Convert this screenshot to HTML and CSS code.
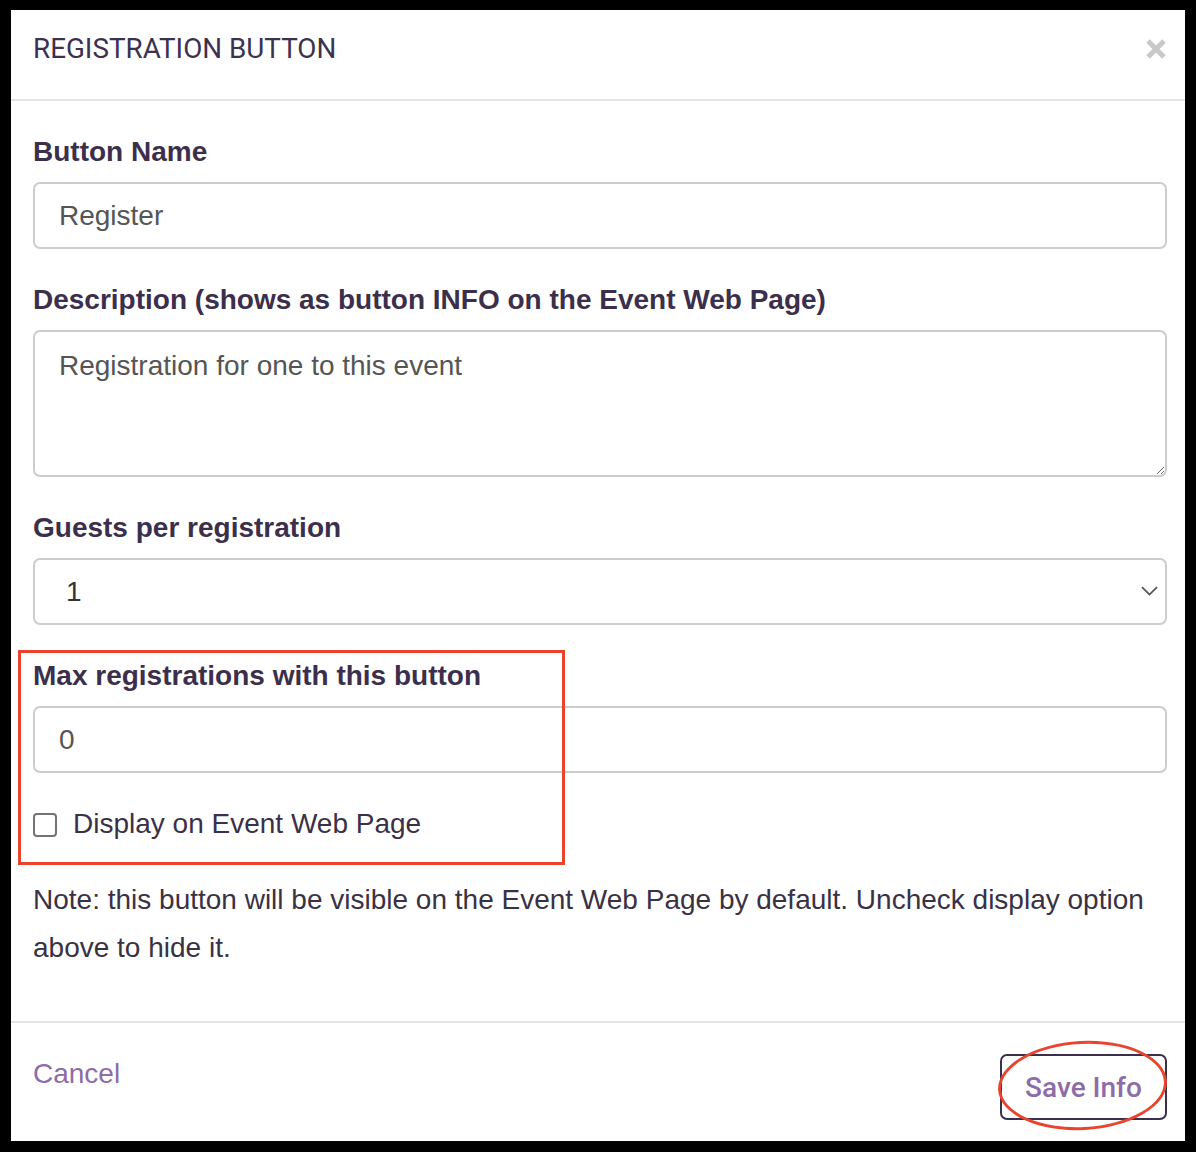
FILE: index.html
```html
<!DOCTYPE html>
<html>
<head>
<meta charset="utf-8">
<link rel="stylesheet" href="styles.css">
</head>
<body>
<div class="modal">
  <div class="modal-header">
    <h4 class="modal-title">REGISTRATION BUTTON</h4>
    <button class="close" aria-label="Close">
      <svg width="22" height="22" viewBox="0 0 22 22"><path d="M3 3 L19 19 M19 3 L3 19" stroke="#c8c8c8" stroke-width="5" stroke-linecap="butt"/></svg>
    </button>
  </div>
  <div class="modal-body">
    <div class="form-group">
      <label class="lbl">Button Name</label>
      <input class="ctrl" type="text" value="Register">
    </div>
    <div class="form-group">
      <label class="lbl">Description (shows as button INFO on the Event Web Page)</label>
      <textarea class="ctrl area">Registration for one to this event</textarea>
    </div>
    <div class="form-group">
      <label class="lbl">Guests per registration</label>
      <div class="select-wrap">
        <select class="ctrl sel"><option>1</option></select>
        <svg class="chev" width="17" height="10" viewBox="0 0 17 10"><path d="M1 1.2 L8.5 8.6 L16 1.2" fill="none" stroke="#555" stroke-width="1.8"/></svg>
      </div>
    </div>
    <div class="form-group">
      <label class="lbl">Max registrations with this button</label>
      <input class="ctrl" type="text" value="0">
    </div>
    <label class="check-row"><input type="checkbox" class="cb"><span>Display on Event Web Page</span></label>
    <p class="note">Note: this button will be visible on the Event Web Page by default. Uncheck display option above to hide it.</p>
  </div>
  <div class="modal-footer">
    <a class="cancel">Cancel</a>
    <button class="save">Save Info</button>
  </div>
  <div class="mark-box"></div>
  <div class="mark-ellipse"></div>
</div>
</body>
</html>
```
FILE: styles.css
```css
* { box-sizing: border-box; }
html, body { margin: 0; padding: 0; background: #000; }
body { padding: 10px 11px 11px 11px; font-family: "Liberation Sans", Arial, sans-serif; }
.modal {
  position: relative;
  width: 1174px;
  height: 1131px;
  background: #fff;
}
.modal-header {
  display: flex;
  align-items: center;
  justify-content: space-between;
  padding: 24px 18px 35px 22px;
  border-bottom: 2px solid #e5e5e5;
}
.modal-title {
  margin: 0;
  font-family: Roboto, "Liberation Sans", sans-serif;
  font-weight: 400;
  font-size: 27.8px;
  line-height: 30px;
  color: #3d3150;
}
.close {
  border: 0;
  background: none;
  padding: 0;
  width: 22px;
  height: 22px;
  display: flex;
}
.modal-body {
  padding: 31px 18px 49px 22px;
}
.form-group { margin-bottom: 31px; }
.lbl {
  display: block;
  font-weight: 700;
  font-size: 28px;
  line-height: 40px;
  color: #3c2f4b;
  margin-bottom: 10px;
}
.ctrl {
  display: block;
  width: 100%;
  height: 67px;
  border: 2px solid #cccccc;
  border-radius: 7px;
  padding: 0 24px;
  font-family: "Liberation Sans", Arial, sans-serif;
  font-size: 28px;
  color: #555;
  background: #fff;
  outline: none;
}
.area {
  height: 147px;
  padding-top: 14px;
  line-height: 40px;
  resize: vertical;
}
.select-wrap { position: relative; }
.sel {
  appearance: none;
  -webkit-appearance: none;
  padding-left: 31px;
  color: #333;
}
.chev { position: absolute; right: 9px; top: 28px; }
.check-row {
  display: flex;
  align-items: center;
  height: 40px;
  font-size: 28px;
  color: #3c3049;
}
.cb {
  appearance: none;
  -webkit-appearance: none;
  width: 24px;
  height: 24px;
  margin: 2px 16px 0 0;
  border: 2px solid #737373;
  border-radius: 4px;
  background: #fff;
}
.note {
  margin: 32px 0 0 0;
  font-size: 28px;
  line-height: 48px;
  color: #3a3145;
}
.modal-footer {
  display: flex;
  justify-content: space-between;
  align-items: flex-start;
  padding: 31px 18px 20px 22px;
  border-top: 2px solid #e5e5e5;
}
.cancel {
  font-size: 28px;
  line-height: 40px;
  color: #8d6ca8;
}
.save {
  width: 167px;
  height: 66px;
  border: 2px solid #3c2f4b;
  border-radius: 7px;
  background: #fff;
  font-family: Roboto, "Liberation Sans", sans-serif;
  font-weight: 500;
  font-size: 28px;
  color: #8d6ca8;
  padding: 0;
}
.mark-box {
  position: absolute;
  left: 7px;
  top: 640px;
  width: 547px;
  height: 215px;
  border: 3px solid #e8442e;
}
.mark-ellipse {
  position: absolute;
  left: 987px;
  top: 1031px;
  width: 169px;
  height: 89px;
  border: 3px solid #e8442e;
  border-radius: 50%;
  transform: rotate(-3deg);
}
```
